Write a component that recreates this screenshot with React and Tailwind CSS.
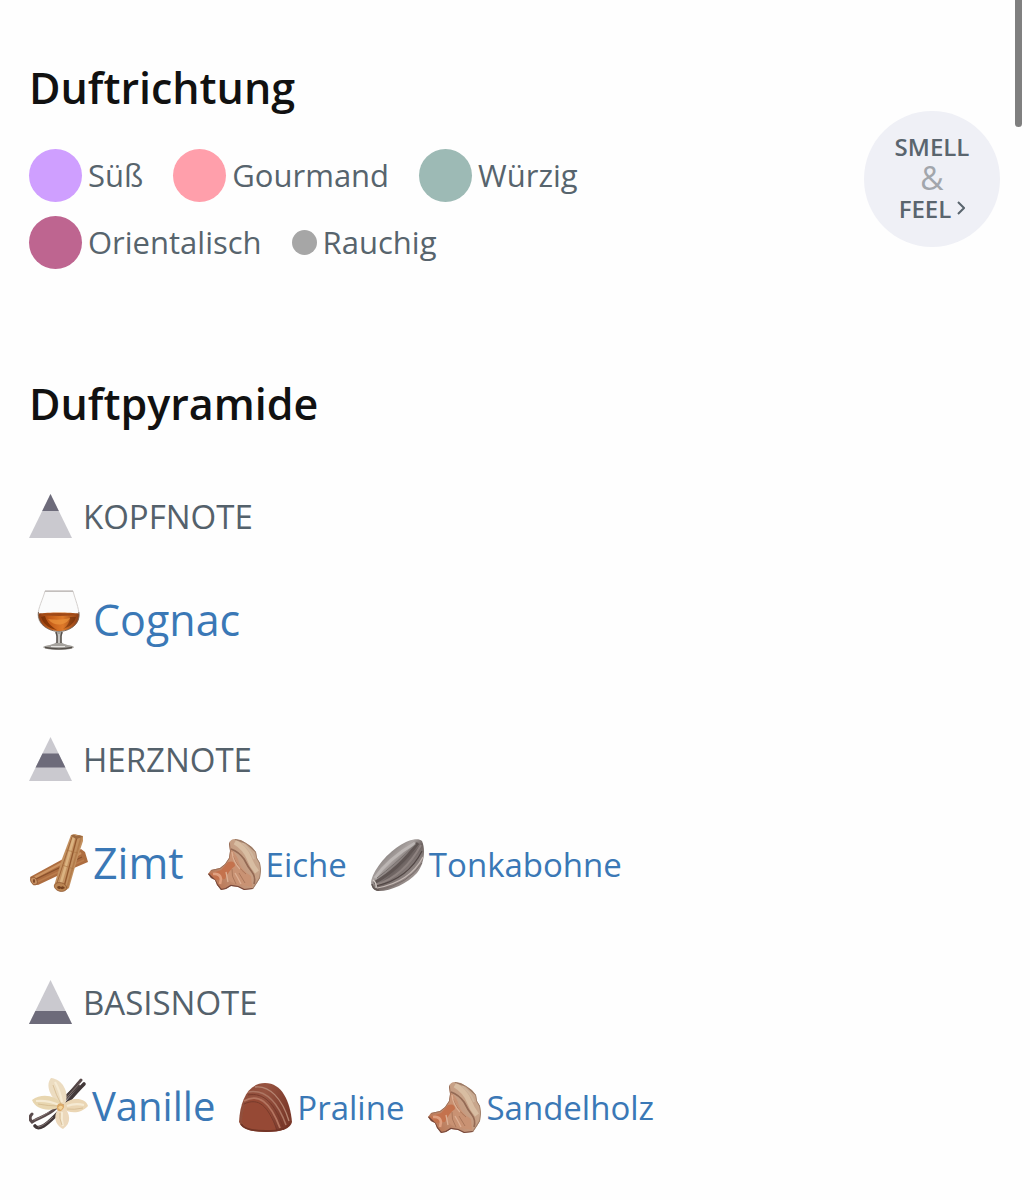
import React from "react";

const directions = [
  { name: "Süß", dot: "w-[53px] h-[53px] bg-[#cf9fff]" },
  { name: "Gourmand", dot: "w-[53px] h-[53px] bg-[#ff9fab]" },
  { name: "Würzig", dot: "w-[53px] h-[53px] bg-[#9dbab5]" },
  { name: "Orientalisch", dot: "w-[53px] h-[53px] bg-[#be6590]" },
  { name: "Rauchig", dot: "w-[25px] h-[25px] bg-[#a6a6a6]" },
];

const CognacIcon = ({ className }) => (
  <svg viewBox="0 0 60 60" className={className} aria-hidden="true">
    <defs>
      <linearGradient id="cognac" x1="0" y1="0" x2="1" y2="0">
        <stop offset="0" stopColor="#8a3a10" />
        <stop offset="0.25" stopColor="#c25a18" />
        <stop offset="0.6" stopColor="#de7a2a" />
        <stop offset="1" stopColor="#8a3a12" />
      </linearGradient>
      <filter id="cognac-soft">
        <feGaussianBlur stdDeviation="0.7" />
      </filter>
    </defs>
    <path d="M16 1H44C46 9 50 18 50 25C50 35 41 41 30 41S9 35 9 25C9 18 14 9 16 1Z" fill="#fbfbfb" stroke="#cfcbc8" strokeWidth="0.9" />
    <path d="M16 1.2H44" stroke="#b9b5b2" strokeWidth="1.2" />
    <path d="M9.5 23.5C9 35 19 41 30 41S51 35 50 23.5C41 22 19 22 9.5 23.5Z" fill="url(#cognac)" />
    <g filter="url(#cognac-soft)">
      <ellipse cx="29.8" cy="24.5" rx="18" ry="1.4" fill="#a04a18" />
      <path d="M12 27C15 36 22 39 28 40C20 35 17 30 16 26Z" fill="#6f2806" opacity="0.7" />
      <path d="M41 27C41 33 37 37 34 39C41 37 46 32 47 27Z" fill="#5f2205" opacity="0.5" />
      <path d="M19 29C25 30 34 30 41 28C37 36 25 37 19 29Z" fill="#ec943c" opacity="0.7" />
    </g>
    <path d="M9.5 22C8 34 20 41.5 30 41.5S52 34 49.8 22" fill="none" stroke="#77604f" strokeWidth="0.9" />
    <path d="M26 41.5H34L32.5 46V52C34 55 43 55 45 57C44 61 16 61 14 57C17 55 25 55 27.5 52V46Z" fill="#a5a29d" />
    <path d="M27 42L28 46V53M33 42L32 46V53M16 57.5C24 59 36 59 43 57.5" fill="none" stroke="#55504b" strokeWidth="1.4" />
    <path d="M30 44V53M22 56.5H36" stroke="#e4e2df" strokeWidth="1.1" />
  </svg>
);

const CinnamonIcon = ({ className }) => (
  <svg viewBox="0 0 60 60" className={className} aria-hidden="true">
    <path d="M1 44L45 20L52 16L56 19L59 29L45 35L9 52Q2 52 1 44Z" fill="#ad6d40" />
    <path d="M3 46L52 20" stroke="#cc9361" strokeWidth="2.4" />
    <path d="M5 47L53 24" stroke="#88502a" strokeWidth="1.2" />
    <path d="M8 49L55 27" stroke="#bb7d4c" strokeWidth="1.6" />
    <ellipse cx="5" cy="48" rx="3" ry="4.2" transform="rotate(-28 5 48)" fill="#c48e60" stroke="#8f5831" strokeWidth="0.8" />
    <ellipse cx="5" cy="48" rx="1" ry="2" fill="#7b4625" />
    <path d="M42 2L46 1L49 2L54 3L54 8L50 20L40 55Q33 62 25 53L33 26Z" fill="#c39160" />
    <path d="M43 4L27 53" stroke="#a0673b" strokeWidth="1" />
    <path d="M45 4L31 53" stroke="#dbb381" strokeWidth="2.6" />
    <path d="M48 4L35 54" stroke="#94592f" strokeWidth="1.3" />
    <path d="M52 5L38 55" stroke="#b47d4c" strokeWidth="1.8" />
    <path d="M42 3Q44 0 47 3Q51 1 54 4L47 6Z" fill="#9a683f" />
    <path d="M37 17L49 20M33 32L45 36" stroke="#a8713f" strokeWidth="0.6" />
    <ellipse cx="31.5" cy="54" rx="6.3" ry="4.3" transform="rotate(15 31.5 54)" fill="#b98452" stroke="#8f5831" strokeWidth="0.7" />
    <path d="M28 54Q30 52 32 54Q34 52 36 55Q33 57 31.5 55.5Q29 57 28 54Z" fill="#74411f" />
  </svg>
);

// one clip/gradient id per use, the icon is drawn twice on the page
const WoodIcon = ({ className }) => {
  const id = React.useId();
  return (
    <svg viewBox="0 0 54 54" className={className} aria-hidden="true">
      <defs>
        <linearGradient id={`${id}-fill`} x1="0" y1="0.8" x2="0.9" y2="0.2">
          <stop offset="0" stopColor="#b8714f" />
          <stop offset="0.5" stopColor="#c4967a" />
          <stop offset="1" stopColor="#c9ac93" />
        </linearGradient>
        <clipPath id={`${id}-shape`}>
          <path d="M21 6Q22 1 27 1L33 2L38 5L44 9L48 14L49 20L52 25L53 32L52 40L49 45L45 51L36 52L30 49L23 48L18 51L13 52L9 47L7 42L3 40L0 36L3 32L12 30L17 26L21 20L22 13Z" />
        </clipPath>
        <filter id={`${id}-soft`}>
          <feGaussianBlur stdDeviation="0.6" />
        </filter>
      </defs>
      <g clipPath={`url(#${id}-shape)`}>
        <rect width="54" height="54" fill={`url(#${id}-fill)`} />
        <g filter={`url(#${id}-soft)`} fill="none">
          <path d="M27 4Q37 10 41 20Q44 28 49 34" stroke="#d8bda2" strokeWidth="5" />
          <path d="M34 5Q43 12 46 21" stroke="#cfb59d" strokeWidth="2" />
          <path d="M22 10Q30 18 31 25Q34 33 43 38L44 49L28 46Q17 43 16 30Z" fill="#c99273" />
          <path d="M23 11Q31 14 36 21Q40 29 44 34Q48 39 46 46" stroke="#946a54" strokeWidth="1.7" />
          <path d="M20 24Q27 22 27 28Q21 32 17 41L7 42L2 36L13 32Z" fill="#c4724e" />
          <path d="M5 36Q12 35 13 41L12 46" stroke="#dfa080" strokeWidth="2.6" />
          <path d="M25 18Q29 29 38 36M24 31Q23 38 28 46M31 35L37 45" stroke="#ab775b" strokeWidth="1" />
          <path d="M24 14Q25 24 32 31M18 34L20 44M27 35Q30 40 33 46" stroke="#ddb094" strokeWidth="1.3" />
          <path d="M0 36L7 43L9 47L13 52L18 51L23 48L30 49L36 52L45 51" stroke="#74463a" strokeWidth="2.2" />
          <path d="M21 3L22 13L21 20L17 26L12 30L3 32" stroke="#956b56" strokeWidth="1.4" />
          <path d="M27 1L38 5L48 14L49 20L52 25L53 32L52 40L45 51" stroke="#9c7b67" strokeWidth="1.6" />
        </g>
      </g>
    </svg>
  );
};

const TonkaIcon = ({ className }) => (
  <svg viewBox="0 0 54 54" className={className} aria-hidden="true">
    <defs>
      <linearGradient id="tonka" x1="0.2" y1="0.2" x2="0.8" y2="0.8">
        <stop offset="0" stopColor="#77706f" />
        <stop offset="0.35" stopColor="#aaa3a1" />
        <stop offset="0.55" stopColor="#6d6361" />
        <stop offset="1" stopColor="#a59b98" />
      </linearGradient>
      <filter id="tonka-soft">
        <feGaussianBlur stdDeviation="0.5" />
      </filter>
    </defs>
    <path d="M0 44C2 33 14 17 28 8C37 2 47 -1 51 3C55 12 53 26 46 35C36 46 18 54 6 53Q0 51 0 44Z" fill="url(#tonka)" />
    <g filter="url(#tonka-soft)" fill="none">
      <path d="M4 40Q17 21 44 5" stroke="#bcb6b4" strokeWidth="3" />
      <path d="M3 45Q27 32 47 5" stroke="#5e5553" strokeWidth="3" />
      <path d="M5 47Q33 38 50 7" stroke="#8e8380" strokeWidth="2" />
      <path d="M5 48Q37 41 51 13" stroke="#514644" strokeWidth="1.2" />
      <path d="M6 50Q39 44 52 19" stroke="#c6bab5" strokeWidth="1.2" />
      <path d="M8 52Q37 46 51 25" stroke="#786c69" strokeWidth="1" />
      <path d="M6 40Q22 28 45 6" stroke="#77706e" strokeWidth="1" />
      <path d="M2 42Q6 45 5 50" stroke="#d5cdc7" strokeWidth="1.3" />
      <path d="M1 46Q2 52 8 52" stroke="#625855" strokeWidth="1.5" />
    </g>
  </svg>
);

const VanillaIcon = ({ className }) => (
  <svg viewBox="0 0 60 60" className={className} aria-hidden="true">
    <path d="M52 4C44 13 38 22 27 32C19 40 8 42 3 46Q-1 42 3 38" fill="none" stroke="#5a4b4c" strokeWidth="3" strokeLinecap="round" />
    <path d="M55 8C42 21 36 30 26 40C18 48 10 55 6 50" fill="none" stroke="#423839" strokeWidth="3.6" strokeLinecap="round" />
    <path d="M49 10C42 16 36 22 28 31" fill="none" stroke="#4b4040" strokeWidth="4" strokeLinecap="round" />
    <path d="M51 7Q41 18 30 30M24 41Q15 50 9 51M20 36Q11 42 5 44" fill="none" stroke="#8a7a78" strokeWidth="0.9" />
    <path d="M32 29C21 22 16 9 22 2C33 3 41 16 36 28Z" fill="#ecdcc0" />
    <path d="M32 31C20 36 7 34 3 24C13 17 26 19 34 29Z" fill="#e8d6b0" />
    <path d="M34 29C42 20 57 22 59 30C52 38 40 38 33 32Z" fill="#ebd6b4" />
    <path d="M31 31C23 39 26 49 34 53C43 47 41 37 35 31Z" fill="#ecd8bb" />
    <path d="M26 6Q31 15 33 26M7 25Q19 24 30 29M38 30Q46 27 55 29M33 36Q32 43 34 50" fill="none" stroke="#f5ead3" strokeWidth="2.2" />
    <path d="M24 9Q27 19 32 28M9 28Q19 30 30 30M38 33Q45 34 54 32M31 37Q30 42 33 49" fill="none" stroke="#d0b588" strokeWidth="0.7" />
    <path d="M28 30Q29 26 34 28Q37 31 32 35Q27 36 28 30Z" fill="#dba968" />
    <path d="M29 32Q31 28 34 31L32 34Z" fill="#f3d49a" />
  </svg>
);

const PralineIcon = ({ className }) => (
  <svg viewBox="0 0 54 54" className={className} aria-hidden="true">
    <defs>
      <linearGradient id="praline" x1="0" y1="0" x2="1" y2="0.3">
        <stop offset="0" stopColor="#8c4a38" />
        <stop offset="0.5" stopColor="#975340" />
        <stop offset="1" stopColor="#7c3a2b" />
      </linearGradient>
      <filter id="praline-soft">
        <feGaussianBlur stdDeviation="0.5" />
      </filter>
    </defs>
    <path d="M0 41C1 20 9 2 26 2C43 2 51 20 53 41Q51 51 27 51Q3 51 0 41Z" fill="url(#praline)" />
    <g filter="url(#praline-soft)" fill="none">
      <path d="M3 41Q4 19 15 18C27 19 33 32 37 49Q8 53 3 41Z" fill="#964a34" />
      <path d="M5 20C19 12 31 20 41 47" stroke="#b57661" strokeWidth="1.8" />
      <path d="M9 11C25 8 38 19 47 44" stroke="#ad7663" strokeWidth="1.5" />
      <path d="M16 6C30 4 43 17 50 40" stroke="#b58471" strokeWidth="1.3" />
      <path d="M5 23C20 16 29 25 38 49M9 14C25 11 36 23 44 46" stroke="#74382a" strokeWidth="0.9" />
      <path d="M2 43Q6 50 27 50Q48 50 51 42" stroke="#733527" strokeWidth="1.8" />
    </g>
  </svg>
);

const sizes = {
  lg: { link: "gap-1 text-[43px] leading-[60px]", icon: "w-[60px] h-[60px]" },
  md: { link: "gap-[3px] text-[40px] leading-[60px]", icon: "w-[60px] h-[60px]" },
  sm: { link: "gap-1 text-[33px] leading-[56px]", icon: "w-[54px] h-[54px]" },
};

const notes = [
  {
    title: "KOPFNOTE",
    band: "21.5,0 29.8,17 13.2,17",
    items: [{ name: "Cognac", Icon: CognacIcon, size: "lg" }],
  },
  {
    title: "HERZNOTE",
    band: "13.5,16.5 29.5,16.5 36.4,30.5 6.6,30.5",
    items: [
      { name: "Zimt", Icon: CinnamonIcon, size: "lg" },
      { name: "Eiche", Icon: WoodIcon, size: "sm" },
      { name: "Tonkabohne", Icon: TonkaIcon, size: "sm" },
    ],
  },
  {
    title: "BASISNOTE",
    band: "6.4,31 36.6,31 43,44 0,44",
    items: [
      { name: "Vanille", Icon: VanillaIcon, size: "md" },
      { name: "Praline", Icon: PralineIcon, size: "sm" },
      { name: "Sandelholz", Icon: WoodIcon, size: "sm" },
    ],
  },
];

const NoteSection = ({ title, band, items }) => (
  <section className="mb-[87px]">
    <h3 className="flex items-start gap-[11px] text-[33px] leading-[46px] text-[#54616b]">
      <svg viewBox="0 0 43 44" className="w-[43px] h-[44px]" aria-hidden="true">
        <polygon points="21.5,0 43,44 0,44" fill="#cac9cf" />
        <polygon points={band} fill="#6d6b7a" />
      </svg>
      {title}
    </h3>
    <ul className="flex flex-wrap items-end gap-x-6 mt-[50px]">
      {items.map(({ name, Icon, size }) => (
        <li key={name}>
          <a href="#" className={`flex items-center text-[#3a78b6] ${sizes[size].link}`}>
            <Icon className={sizes[size].icon} />
            {name}
          </a>
        </li>
      ))}
    </ul>
  </section>
);

const App = () => {
  return (
    <div className="relative min-h-screen overflow-hidden bg-[#fefefe] font-['Open_Sans',sans-serif]">
      <div className="absolute top-0 right-2 w-[7px] h-[127px] rounded-b-full bg-[#7f7f7f]" />
      <main className="pl-[29px] pr-[30px] pt-[60px]">
        <section className="flex items-end justify-between mb-[107px]">
          <div className="max-w-2xl">
            <h2 className="text-[43px] leading-[56px] font-semibold text-[#111]">Duftrichtung</h2>
            <ul className="flex flex-wrap gap-x-[30px] gap-y-[14px] mt-[33px]">
              {directions.map((d) => (
                <li
                  key={d.name}
                  className="flex items-center gap-[6px] text-[31px] leading-[53px] text-[#57646d]"
                >
                  <span className={`rounded-full ${d.dot}`} />
                  {d.name}
                </li>
              ))}
            </ul>
          </div>
          <button
            type="button"
            className="flex flex-col items-center justify-center shrink-0 w-[136px] h-[136px] mb-[22px] pb-1 rounded-full bg-[#eff0f6] text-[24px] leading-[31px] font-semibold text-[#5a656e]"
          >
            <span>SMELL</span>
            <span className="text-[32px] font-normal text-[#a2a6ac]">&amp;</span>
            <span className="flex items-center gap-[6px]">
              FEEL
              <svg viewBox="0 0 8 14" className="w-2 h-[14px]" fill="none" aria-hidden="true">
                <path d="M1 1L7 7L1 13" stroke="#5a656e" strokeWidth="2" />
              </svg>
            </span>
          </button>
        </section>
        <h2 className="text-[43px] leading-[56px] font-semibold text-[#111] mb-[62px]">Duftpyramide</h2>
        <div className="flex flex-col">
          {notes.map((note) => (
            <NoteSection key={note.title} {...note} />
          ))}
        </div>
      </main>
    </div>
  );
};

export default App;
